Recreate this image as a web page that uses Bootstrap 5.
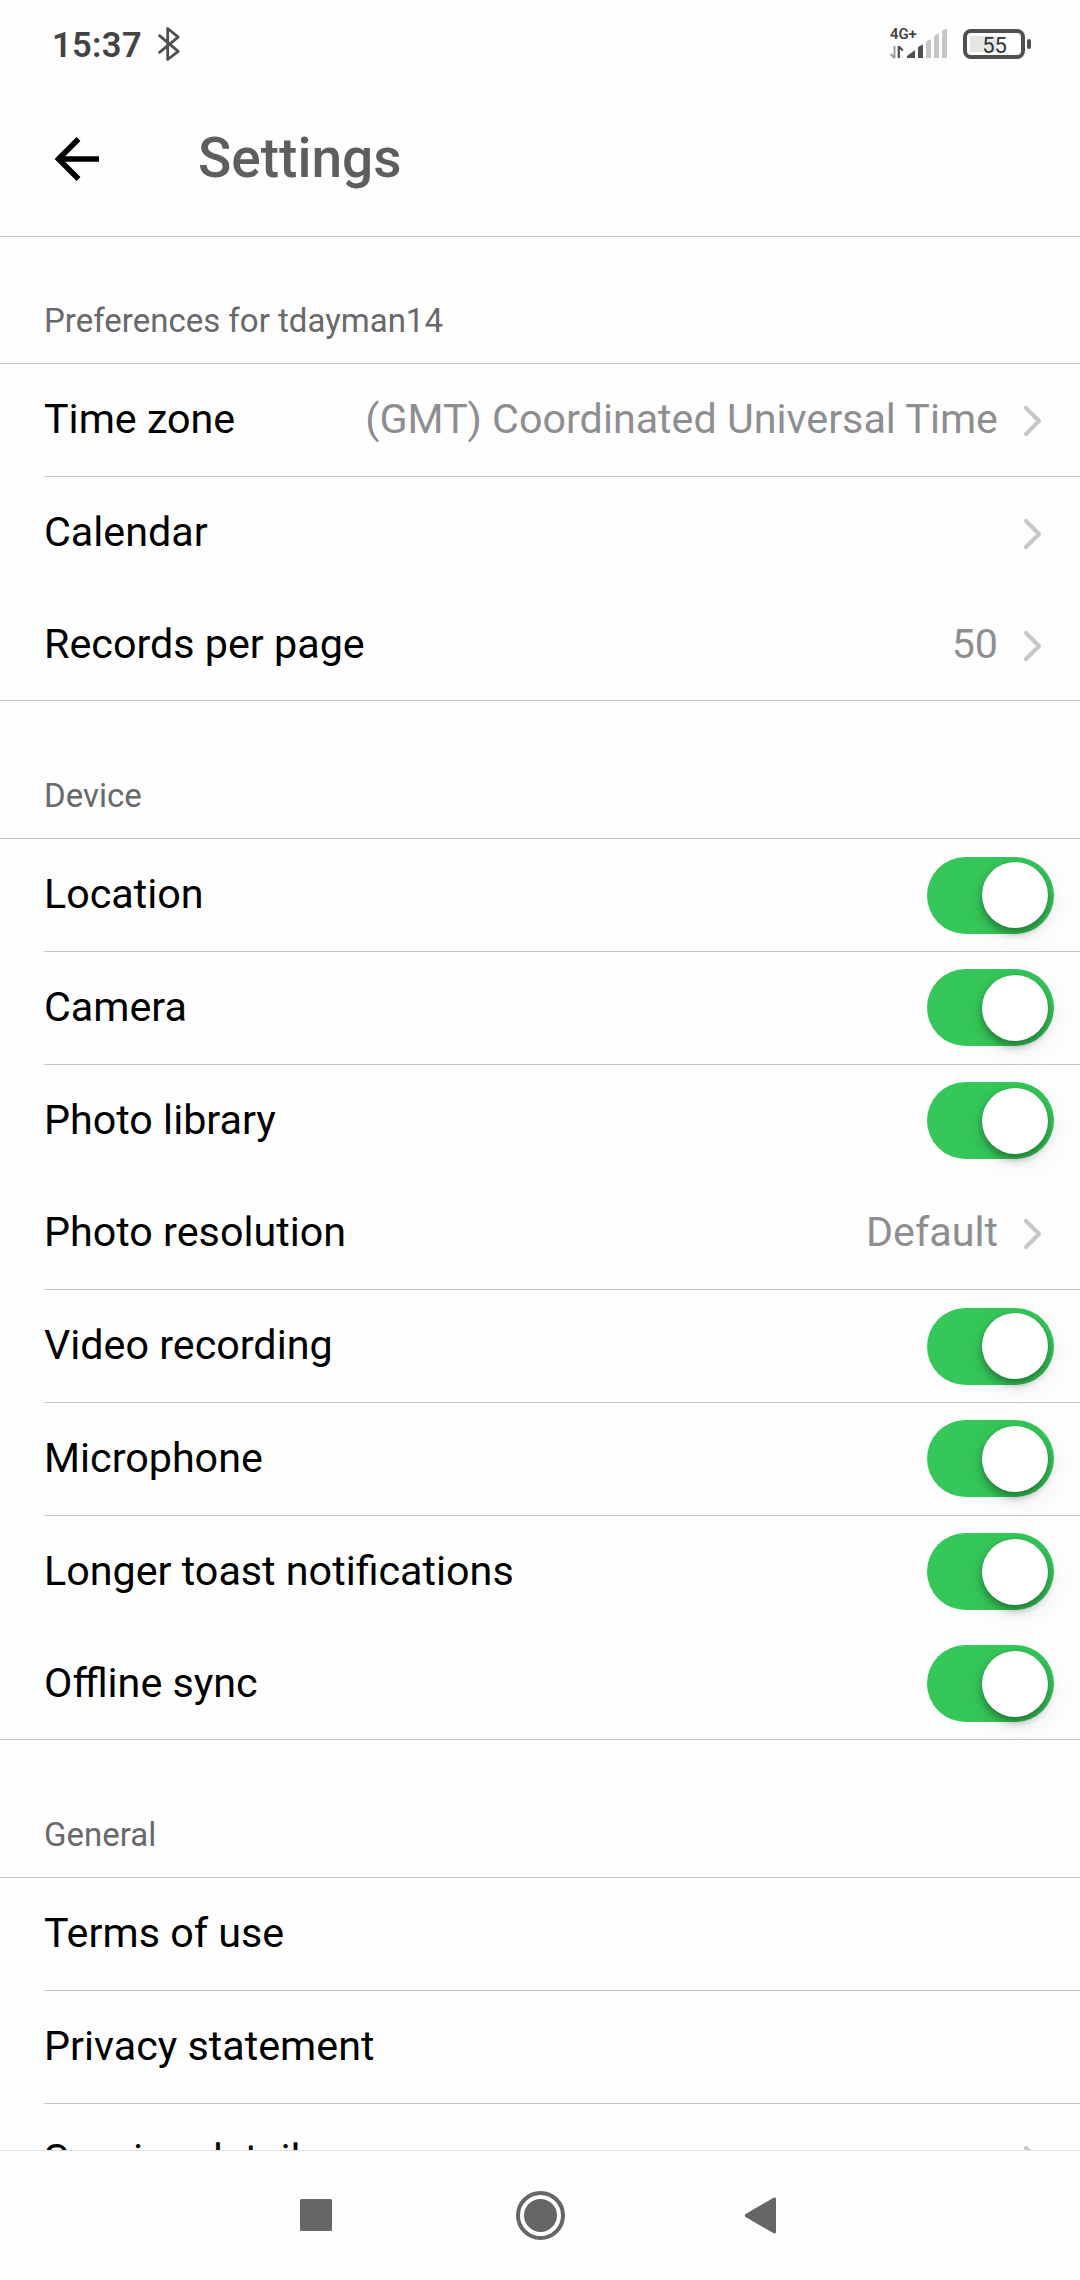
<!DOCTYPE html>
<html lang="en">
<head>
<meta charset="utf-8">
<meta name="viewport" content="width=device-width, initial-scale=1">
<title>Settings</title>
<link href="https://cdn.jsdelivr.net/npm/bootstrap@5.3.0/dist/css/bootstrap.min.css" rel="stylesheet">
<style>
  body { font-family: Roboto, sans-serif; color: #000; background: #fefefe; }
  .phone { width: 1080px; height: 2280px; }
  .statusbar { height: 88px; padding: 2px 46px 0 52px; color: #434343; }
  .clock { width: 105px; font-size: 34.5px; font-weight: 600; line-height: 86px; letter-spacing: .35px; }
  .bt { margin-top: -2px; }
  .appbar { height: 149px; padding: 0 54px 6px; border-bottom: 1px solid #c8c8c8; }
  .appbar h1 { font-size: 55px; font-weight: 500; color: #5f5e5d; line-height: 66px; margin: -2px 0 0 98px; }
  .group-title { font-size: 33px; color: #69696b; padding-left: 44px; line-height: 40px; }
  .group-title { height: 126px; padding-top: 64px; }
  .later .group-title { height: 137px; padding-top: 75px; }
  .group-rows { border-top: 1px solid #c8c8c8; border-bottom: 1px solid #c8c8c8; }
  .setting { height: 112px; margin-left: 44px; padding-right: 26px; font-size: 41.25px; line-height: 50px; padding-bottom: 3px; }
  .setting.lined { height: 113px; border-bottom: 1px solid #c8c8c8; }
  .setting:last-child { margin-bottom: -1px; }
  .value-text { color: #8e8e91; }
  .chev { width: 20px; height: 32px; margin: 4px 12px 0 24px; }
  .toggle { width: 127px; height: 77px; border-radius: 39px; background: #35c759; padding: 6px 6px 5px; margin-top: 2px; }
  .setting:first-child .toggle, .value-row + .setting .toggle { margin-top: 4px; padding-top: 5px; }
  .knob { width: 66px; height: 66px; border-radius: 50%; background: #fff; box-shadow: 0 5px 8px rgba(0,0,0,.36), 3px 8px 34px rgba(0,0,0,.08); }
  .navkeys { height: 130px; border-top: 1px solid #e2e2e2; }
</style>
</head>
<body>
<div class="phone d-flex flex-column overflow-hidden">
  <header class="statusbar d-flex align-items-center flex-shrink-0">
    <span class="clock">15:37</span>
    <svg class="bt" width="24" height="36" viewBox="0 0 24 36" fill="none" stroke="#505050" stroke-width="2.8" stroke-linejoin="round" stroke-linecap="round"><path d="M2.500 9.700L21.200 25.300 10.700 33.500V2.500L21.200 11.200 2.500 26.300"/></svg>
    <svg class="ms-auto overflow-visible" width="144" height="36" viewBox="0 0 144 36">
      <text x="0" y="12" font-family="Roboto" font-size="14.800" font-weight="600" fill="#434343">4G+</text>
      <path d="M4.500 19v12M4.500 31l-4-4" stroke="#999" stroke-width="2" fill="none"/><path d="M8.800 19v12M8.800 19.500l4 4" stroke="#505050" stroke-width="2.300" fill="none"/>
      <path d="M17 31v-2l8-6v8zM28 31V20.500q0-1 5-3v13.500z" fill="#505050"/>
      <path d="M36 31V15.500q0-2 5-3v18.500zM44 31V10q0-2 5-3.500v24.500zM52 31V5q0-2 5-3.500v29.500z" fill="#c6c6c6"/>
      <rect x="75" y="4" width="58" height="26" rx="6" fill="none" stroke="#505050" stroke-width="4"/>
      <rect x="80" y="9" width="27" height="16" rx="2" fill="#e5e5e5"/>
      <rect x="137" y="12" width="4" height="10" rx="2" fill="#505050"/>
      <text x="104.500" y="25.500" text-anchor="middle" font-family="Roboto" font-size="22" fill="#333">55</text>
    </svg>
  </header>
  <nav class="appbar d-flex align-items-center flex-shrink-0">
    <svg width="46" height="46" viewBox="0 0 46 46"><path d="M45 23H5M24.500 3L4.500 23l20 20" fill="none" stroke="#000" stroke-width="5.500"/></svg>
    <h1>Settings</h1>
  </nav>
  <main class="flex-grow-1 overflow-hidden">
    <section>
      <div class="group-title">Preferences for tdayman14</div>
      <div class="group-rows">
        <div class="setting lined d-flex align-items-center"><span>Time zone</span><span class="value-text ms-auto">(GMT) Coordinated Universal Time</span><svg class="chev"><use href="#chevron"/></svg></div>
        <div class="setting d-flex align-items-center"><span>Calendar</span><svg class="chev ms-auto"><use href="#chevron"/></svg></div>
        <div class="setting d-flex align-items-center"><span>Records per page</span><span class="value-text ms-auto">50</span><svg class="chev"><use href="#chevron"/></svg></div>
      </div>
    </section>
    <section class="later">
      <div class="group-title">Device</div>
      <div class="group-rows">
        <div class="setting lined d-flex align-items-center justify-content-between"><span>Location</span><span class="toggle d-flex justify-content-end"><i class="knob"></i></span></div>
        <div class="setting lined d-flex align-items-center justify-content-between"><span>Camera</span><span class="toggle d-flex justify-content-end"><i class="knob"></i></span></div>
        <div class="setting d-flex align-items-center justify-content-between"><span>Photo library</span><span class="toggle d-flex justify-content-end"><i class="knob"></i></span></div>
        <div class="setting value-row lined d-flex align-items-center"><span>Photo resolution</span><span class="value-text ms-auto">Default</span><svg class="chev"><use href="#chevron"/></svg></div>
        <div class="setting lined d-flex align-items-center justify-content-between"><span>Video recording</span><span class="toggle d-flex justify-content-end"><i class="knob"></i></span></div>
        <div class="setting lined d-flex align-items-center justify-content-between"><span>Microphone</span><span class="toggle d-flex justify-content-end"><i class="knob"></i></span></div>
        <div class="setting d-flex align-items-center justify-content-between"><span>Longer toast notifications</span><span class="toggle d-flex justify-content-end"><i class="knob"></i></span></div>
        <div class="setting d-flex align-items-center justify-content-between"><span>Offline sync</span><span class="toggle d-flex justify-content-end"><i class="knob"></i></span></div>
      </div>
    </section>
    <section class="later">
      <div class="group-title">General</div>
      <div class="group-rows">
        <div class="setting lined d-flex align-items-center"><span>Terms of use</span></div>
        <div class="setting lined d-flex align-items-center"><span>Privacy statement</span></div>
        <div class="setting d-flex align-items-center"><span>Session details</span><svg class="chev ms-auto"><use href="#chevron"/></svg></div>
      </div>
    </section>
  </main>
  <footer class="navkeys flex-shrink-0 d-flex justify-content-center">
    <svg width="520" height="129" viewBox="280 0 520 129" fill="#666">
      <rect x="300" y="48" width="32" height="32" rx="1.500"/>
      <circle cx="540.500" cy="64.400" r="16.500"/><circle cx="540.500" cy="64.400" r="22.500" fill="none" stroke="#666" stroke-width="4"/>
      <path d="M776 48v33q0 2-2 1.500l-28.500-16.500q-1.500-1.500 0-3l28.500-16.500q2-.5 2 1.500z"/>
    </svg>
  </footer>
</div>
<svg class="d-none"><symbol id="chevron" viewBox="0 0 20 32"><path d="M4 3L17 16 4 29" fill="none" stroke="#c7c7c7" stroke-width="4.200" stroke-linecap="round" stroke-linejoin="round"/></symbol></svg>
<script src="https://cdn.jsdelivr.net/npm/bootstrap@5.3.0/dist/js/bootstrap.bundle.min.js"></script>
</body>
</html>
